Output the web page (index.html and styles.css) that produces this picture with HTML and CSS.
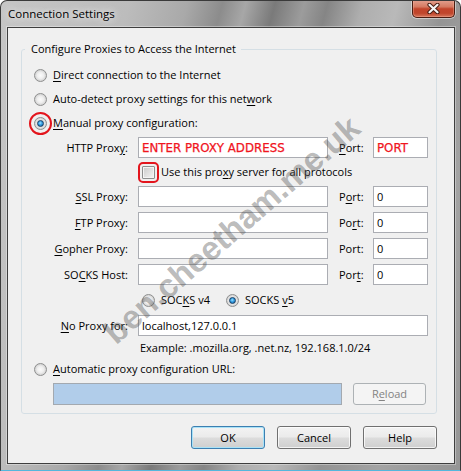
FILE: index.html
```html
<!DOCTYPE html>
<html>
<head>
<meta charset="utf-8">
<title>Connection Settings</title>
<link rel="stylesheet" href="styles.css">
</head>
<body>
<div class="window">
  <div class="titlebar">
    <span class="title">Connection Settings</span>
    <div class="close">
      <svg width="13" height="11" viewBox="0 0 13 11">
        <path d="M2.5 1.8 L10.5 9.2 M10.5 1.8 L2.5 9.2" stroke="#4a1e14" stroke-width="4.2" stroke-linecap="round"/>
        <path d="M2.5 1.8 L10.5 9.2 M10.5 1.8 L2.5 9.2" stroke="#f4f4f4" stroke-width="2.2" stroke-linecap="round"/>
      </svg>
    </div>
  </div>
  <div class="client">
    <fieldset class="group">
      <legend>Configure Proxies to Access the Internet</legend>
      <div class="opt"><span class="radio"></span><span><u>D</u>irect connection to the Internet</span></div>
      <div class="opt"><span class="radio"></span><span>Auto-detect proxy settings for this net<u>w</u>ork</span></div>
      <div class="opt"><span class="radio on mark"></span><span><u>M</u>anual proxy configuration:</span></div>
      <div class="proxy-grid">
        <span class="lbl">HTTP Prox<u>y</u>:</span>
        <div class="field hint">ENTER PROXY ADDRESS</div>
        <span class="plbl"><u>P</u>ort:</span>
        <div class="field hint">PORT</div>

        <div class="wide check-row"><span class="check mark"></span><span>Use this pro<u>x</u>y server for all protocols</span></div>

        <span class="lbl"><u>S</u>SL Proxy:</span>
        <div class="field"></div>
        <span class="plbl">P<u>o</u>rt:</span>
        <div class="field">0</div>

        <span class="lbl"><u>F</u>TP Proxy:</span>
        <div class="field"></div>
        <span class="plbl">Po<u>r</u>t:</span>
        <div class="field">0</div>

        <span class="lbl"><u>G</u>opher Proxy:</span>
        <div class="field"></div>
        <span class="plbl">Port:</span>
        <div class="field">0</div>

        <span class="lbl">SO<u>C</u>KS Host:</span>
        <div class="field"></div>
        <span class="plbl">Por<u>t</u>:</span>
        <div class="field">0</div>

        <div class="wide socks-row">
          <span class="radio"></span><span class="socks-v4">SOC<u>K</u>S v4</span>
          <span class="radio on"></span><span>SOCKS <u>v</u>5</span>
        </div>

        <span class="lbl"><u>N</u>o Proxy for:</span>
        <div class="field wide-field">localhost,127.0.0.1</div>

        <div class="wide example">Example: .mozilla.org, .net.nz, 192.168.1.0/24</div>
      </div>
      <div class="opt auto"><span class="radio"></span><span><u>A</u>utomatic proxy configuration URL:</span></div>
      <div class="url-row">
        <div class="field url"></div>
        <div class="btn disabled">R<u>e</u>load</div>
      </div>
    </fieldset>
    <div class="buttons">
      <div class="btn default">OK</div>
      <div class="btn">Cancel</div>
      <div class="btn">Help</div>
    </div>
  </div>
  <div class="watermark">ben.cheetham.me.uk</div>
</div>
</body>
</html>
```

FILE: styles.css
```css
html, body {
  margin: 0;
  padding: 0;
  background: #ffffff;
}

body {
  font-family: "Open Sans", "Liberation Sans", sans-serif;
  font-size: 11px;
  line-height: 16px;
  color: #000;
}

u {
  text-decoration: underline;
  text-underline-offset: 2px;
}

.window {
  position: relative;
  width: 461px;
  height: 471px;
  box-sizing: border-box;
  border: 1px solid #3a3a3a;
  border-bottom-color: #55b7dc;
  border-radius: 7px 7px 0 0;
  overflow: hidden;
  display: flex;
  flex-direction: column;
  background: linear-gradient(105deg,
    #c6c6c6 0%, #bcbcbc 22%, #a9a9a9 32%, #8c8c8c 38%, #a7a7a7 42%,
    #7a7a7a 47%, #9c9c9c 52%, #858585 56%, #aeaeae 62%, #b9b9b9 68%,
    #949494 76%, #a3a3a3 86%, #959595 100%);
}

.titlebar {
  height: 26px;
  display: flex;
  align-items: flex-start;
  flex-shrink: 0;
}

.title {
  margin: 5px 0 0 7px;
  font-size: 11.5px;
  text-shadow: 0 0 6px rgba(255, 255, 255, 0.95), 0 0 12px rgba(255, 255, 255, 0.7);
}

.close {
  margin: -1px 5px 0 auto;
  width: 43px;
  height: 18px;
  box-sizing: border-box;
  border: 1px solid #4a1d12;
  border-top: none;
  border-radius: 0 0 5px 5px;
  background: linear-gradient(#e4a190 0%, #d57a62 40%, #c2442b 52%, #c0462c 78%, #d5765c 100%);
  box-shadow: 0 0 0 1px rgba(255, 255, 255, 0.45), inset 0 0 0 1px rgba(255, 190, 170, 0.35);
  display: flex;
  align-items: center;
  justify-content: center;
}

.client {
  flex: 1;
  margin: 0 5px 6px 6px;
  border: 1px solid #3e3e3e;
  box-shadow: 0 0 0 1px rgba(255, 255, 255, 0.35);
  background: #f0f0f0;
  display: flex;
  flex-direction: column;
}

.group {
  margin: 13px 17px 0 13px;
  padding: 6px 0 8px 0;
  border: 1px solid #d5dfe5;
  border-radius: 3px;
  min-width: 0;
}

.group legend {
  margin-left: 3px;
  padding: 0 5px 0 6px;
  line-height: 16px;
}

.opt {
  height: 24px;
  display: flex;
  align-items: center;
  padding-left: 12px;
  gap: 6px;
}

.opt.auto {
  margin-top: 3px;
}

.radio {
  width: 13px;
  height: 13px;
  box-sizing: border-box;
  border-radius: 50%;
  border: 1px solid #8e8f8f;
  background: radial-gradient(circle at 50% 50%, #fbfbfb 0%, #efefef 40%, #d0d0d0 75%, #bdbdbd 100%);
  display: inline-flex;
  align-items: center;
  justify-content: center;
  flex-shrink: 0;
}

.radio.on::after {
  content: "";
  width: 7px;
  height: 7px;
  box-sizing: border-box;
  border-radius: 50%;
  border: 1px solid #143d63;
  background: radial-gradient(circle at 45% 40%, #9fe4ff 0%, #3ba3e6 40%, #0f5c9e 100%);
}

.radio.mark {
  outline: 2px solid #e3151d;
  outline-offset: 3px;
}

.proxy-grid {
  margin-top: 2px;
  display: grid;
  grid-template-columns: 116px 190px 45px 55px;
  grid-template-rows: 21px 18px 21px 21px 21px 21px 20px 21px 13px;
  row-gap: 5px;
}

.lbl {
  text-align: right;
  padding-right: 10px;
  align-self: center;
  white-space: nowrap;
}

.plbl {
  padding-left: 11px;
  align-self: center;
}

.field {
  box-sizing: border-box;
  border: 1px solid #abadb3;
  background: #fff;
  padding-left: 3px;
  display: flex;
  align-items: center;
}

.wide-field {
  grid-column: 2 / 5;
}

.hint {
  font-family: "DejaVu Sans", "Liberation Sans", sans-serif;
  font-size: 11.8px;
  color: #f0141e;
  padding-left: 3px;
  -webkit-text-stroke: 0.25px #f0141e;
}

.wide {
  grid-column: 2 / 5;
  display: flex;
  align-items: center;
}

.check-row {
  padding-left: 4px;
  gap: 6px;
}

.check {
  width: 13px;
  height: 13px;
  box-sizing: border-box;
  border: 1px solid #8e8f8f;
  border-radius: 1px;
  background: linear-gradient(135deg, #cbcbcb 0%, #e2e2e2 55%, #f6f6f6 100%);
  box-shadow: inset 0 0 0 1px #f4f4f4;
  flex-shrink: 0;
}

.check.mark {
  outline: 2px solid #e3151d;
  outline-offset: 2px;
}

.socks-row {
  padding-left: 4px;
  gap: 6px;
}

.socks-v4 {
  margin-right: 10px;
}

.example {
  padding-left: 2px;
  line-height: 13px;
}

.url-row {
  margin-top: 2px;
  padding-left: 31px;
  display: flex;
  gap: 11px;
  height: 22px;
}

.field.url {
  width: 289px;
  background: #b1cdea;
  border-color: #a3a9b0;
}

.btn {
  width: 74px;
  height: 23px;
  box-sizing: border-box;
  border: 1px solid #707070;
  border-radius: 3px;
  background: linear-gradient(#f3f3f3 0%, #ebebeb 48%, #dcdcdc 52%, #cfcfcf 100%);
  box-shadow: inset 0 0 0 1px rgba(255, 255, 255, 0.75);
  display: flex;
  align-items: center;
  justify-content: center;
}

.btn.default {
  border-color: #3c7fb1;
  box-shadow: inset 0 0 0 1px #a9e2f7;
}

.btn.disabled {
  width: 73px;
  height: 22px;
  border-color: #adb2b5;
  background: #f4f4f4;
  box-shadow: none;
  color: #838383;
}

.buttons {
  margin: 12px 17px 0 0;
  display: flex;
  justify-content: flex-end;
  gap: 12px;
}

.watermark {
  position: absolute;
  left: 231px;
  top: 229px;
  transform: translate(-50%, -50%) rotate(-41deg);
  font-family: "Liberation Sans", Arial, sans-serif;
  font-weight: bold;
  font-size: 33px;
  line-height: 36px;
  white-space: nowrap;
  color: rgba(80, 80, 80, 0.4);
  pointer-events: none;
}
```
